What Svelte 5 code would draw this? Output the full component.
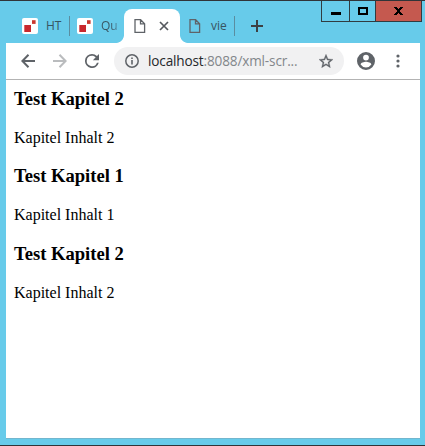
<script>
  const chapters = [
    { title: 'Test Kapitel 2', text: 'Kapitel Inhalt 2' },
    { title: 'Test Kapitel 1', text: 'Kapitel Inhalt 1' },
    { title: 'Test Kapitel 2', text: 'Kapitel Inhalt 2' },
  ];
</script>

{#snippet favicon()}
  <svg class="favicon" width="16" height="16" viewBox="0 0 16 16">
    <rect width="16" height="16" rx="2" fill="#fff" />
    <rect x="2.3" y="7" width="6.7" height="7" fill="#c9282d" />
    <rect x="10" y="2.2" width="3.6" height="3.7" fill="#c9382f" />
  </svg>
{/snippet}

{#snippet page()}
  <svg class="page" width="12" height="14" viewBox="0 0 12 14" fill="none" stroke="#5f6368" stroke-width="1.3">
    <path d="M1 .7h5.6l4 4v8.6H1zM6.5 .7v4.1h4.1" />
  </svg>
{/snippet}

<div class="window">
  <header>
    <div class="tabs">
      <div class="tab first">{@render favicon()}<span class="t1">HT</span></div>
      <i class="sep"></i>
      <div class="tab second">{@render favicon()}<span class="t2">Qu</span></div>
      <div class="tab active">
        {@render page()}
        <svg class="x" width="10" height="10" viewBox="0 0 10 10" stroke="#55595e" stroke-width="1.7"><path d="M1 1l8 8M9 1l-8 8" /></svg>
      </div>
      <div class="tab third">{@render page()}<span class="t3">vie</span></div>
      <i class="sep"></i>
      <svg class="plus" width="12" height="12" viewBox="0 0 12 12" stroke="#3c4043" stroke-width="2"><path d="M6 0v12M0 6h12" /></svg>
    </div>
    <div class="controls">
      <div class="min"><svg width="10" height="3"><rect width="10" height="3" /></svg></div>
      <div class="max"><svg width="10" height="8" fill="none" stroke="#000" stroke-width="2"><path d="M1 1h8v6H1z" /></svg></div>
      <div class="close"><svg width="9" height="8" viewBox="0 0 9 8" shape-rendering="crispEdges"><path d="M0 0h3v1h1v1h1V1h1V0h3v1H8v1H7v1H6v2h1v1h1v1h1v1H6V7H5V6H4v1H3v1H0V7h1V6h1V5h1V3H2V2H1V1H0z" /></svg></div>
    </div>
  </header>

  <main>
    <nav>
      <svg class="back" width="14" height="14" viewBox="0 0 14 14" fill="none" stroke="#5f6368" stroke-width="2"><path d="M14 7H1.5M7.5 .7L1.4 7l6.1 6.3" /></svg>
      <svg class="forward" width="14" height="14" viewBox="0 0 14 14" fill="none" stroke="#babcbe" stroke-width="2"><path d="M0 7h12.5M6.5 .7L12.6 7l-6.1 6.3" /></svg>
      <svg class="reload" width="14" height="14" viewBox="4 4 16 16" fill="#5f6368"><path d="M17.65 6.35A7.96 7.96 0 0 0 12 4a8 8 0 1 0 7.73 10h-2.08A6 6 0 1 1 12 6c1.66 0 3.14.69 4.22 1.78L13 11h7V4z" /></svg>
      <div class="address">
        <svg class="info" width="14" height="14" viewBox="0 0 14 14"><circle cx="7" cy="7" r="6.2" fill="none" stroke="#5f6368" stroke-width="1.5" /><path d="M6.2 3.4h1.6V5H6.2zM6.2 6.1h1.6v4.5H6.2z" fill="#5f6368" /></svg>
        <span class="url"><b>localhost</b>:8088/xml-scr...</span>
        <svg class="star" width="14" height="14" viewBox="2 2 20 19" fill="#5f6368" stroke="#5f6368" stroke-width=".5"><path d="M22 9.24l-7.19-.62L12 2 9.19 8.63 2 9.24l5.46 4.73L5.82 21 12 17.27 18.18 21l-1.63-7.03zM12 15.4l-3.76 2.27 1-4.28-3.32-2.88 4.38-.38L12 6.1l1.71 4.04 4.38.38-3.32 2.88 1 4.28z" /></svg>
      </div>
      <svg class="user" width="18" height="18" viewBox="2 2 20 20" fill="#5f6368"><path d="M12 2a10 10 0 1 0 0 20 10 10 0 0 0 0-20zm0 3a3.2 3.2 0 1 1 0 6.4A3.2 3.2 0 0 1 12 5zm0 14.2a7.2 7.2 0 0 1-6-3.22c.03-1.99 4-3.08 6-3.08s5.97 1.09 6 3.08a7.2 7.2 0 0 1-6 3.22z" /></svg>
      <svg class="menu" width="4" height="14" fill="#5f6368"><circle cx="2" cy="2" r="1.6" /><circle cx="2" cy="7" r="1.6" /><circle cx="2" cy="12" r="1.6" /></svg>
    </nav>
    <article>
      {#each chapters as chapter}
        <section>
          <h3>{chapter.title}</h3>
          <p>{chapter.text}</p>
        </section>
      {/each}
    </article>
  </main>
</div>

<style>
  :global(body) { margin: 0; }
  .window {
    box-sizing: border-box;
    width: 425px;
    height: 446px;
    padding: 0 5px 7px 6px;
    border-top: 1px solid #303438;
    border-bottom: 1px solid #303438;
    background: #67cbea;
    display: flex;
    flex-direction: column;
    overflow: hidden;
  }
  svg { display: block; flex: none; }
  header { height: 42px; flex: none; display: flex; justify-content: space-between; }
  .tabs {
    display: flex;
    align-items: center;
    height: 34px;
    padding-top: 8px;
    font: 12px 'Open Sans', sans-serif;
    color: #385460;
  }
  .tab { display: flex; align-items: center; height: 34px; box-sizing: border-box; }
  .tab span { position: relative; top: -1px; }
  .first { width: 63px; padding-left: 16px; }
  .second { width: 48px; padding-left: 7px; }
  .t1 { margin-left: 8px; }
  .t2 {
    margin-left: 8px;
    width: 16px;
    overflow: hidden;
    background: linear-gradient(90deg, #385460 60%, #5088a0);
    background-clip: text;
    color: transparent;
  }
  .sep { width: 1px; height: 20px; background: #5a8da0; flex: none; }
  .active {
    position: relative;
    width: 56px;
    margin-left: 6px;
    padding-left: 10px;
    background: #fff;
    border-radius: 8px 8px 0 0;
  }
  .active::before, .active::after {
    content: '';
    position: absolute;
    bottom: 0;
    width: 8px;
    height: 8px;
  }
  .active::before { left: -8px; background: radial-gradient(circle at 0 0, transparent 7.5px, #fff 8.3px); }
  .active::after { right: -8px; background: radial-gradient(circle at 100% 0, transparent 7.5px, #fff 8.3px); }
  .x { margin-left: 13px; }
  .third { width: 54px; padding-left: 9px; }
  .t3 { margin-left: 10px; }
  .plus { margin-left: 16px; }
  .controls {
    display: flex;
    height: 21px;
    box-sizing: border-box;
    border: 1px solid #303b40;
    border-top: 0;
    margin-right: -2px;
  }
  .controls div { display: flex; justify-content: center; box-sizing: border-box; border-right: 1px solid #303b40; }
  .min { width: 28px; padding-top: 11px; }
  .max { width: 26px; padding-top: 6px; }
  .controls .close { width: 45px; padding-top: 6px; background: #c5594f; border-right: 0; }
  main {
    flex: 1;
    display: flex;
    flex-direction: column;
    background: #fff;
    box-shadow: 0 1px 0 #72b6ce;
  }
  nav {
    display: flex;
    align-items: center;
    box-sizing: border-box;
    height: 37px;
    padding-left: 15px;
    border-bottom: 1px solid #b3b3b3;
  }
  .forward { margin-left: 18px; }
  .reload { margin-left: 18px; }
  .address {
    display: flex;
    align-items: center;
    box-sizing: border-box;
    width: 230px;
    height: 28px;
    margin-left: 15px;
    padding-left: 11px;
    border-radius: 14px;
    background: #f1f1f2;
  }
  .url {
    width: 171px;
    margin-left: 9px;
    font: 13.6px/20px 'Open Sans', sans-serif;
    letter-spacing: -0.16px;
    color: #83878b;
    white-space: nowrap;
  }
  .url b { font-weight: 400; color: #25282b; }
  .user { margin-left: 13px; }
  .menu { margin-left: 21px; }
  article { padding: 8px; font-family: 'Liberation Serif', serif; color: #000; }
  section { height: 77.4px; }
  h3 { margin: 0 0 18.9px; font-size: 18.6px; line-height: 21px; }
  p { margin: 0; font-size: 16px; line-height: 19px; }
</style>
